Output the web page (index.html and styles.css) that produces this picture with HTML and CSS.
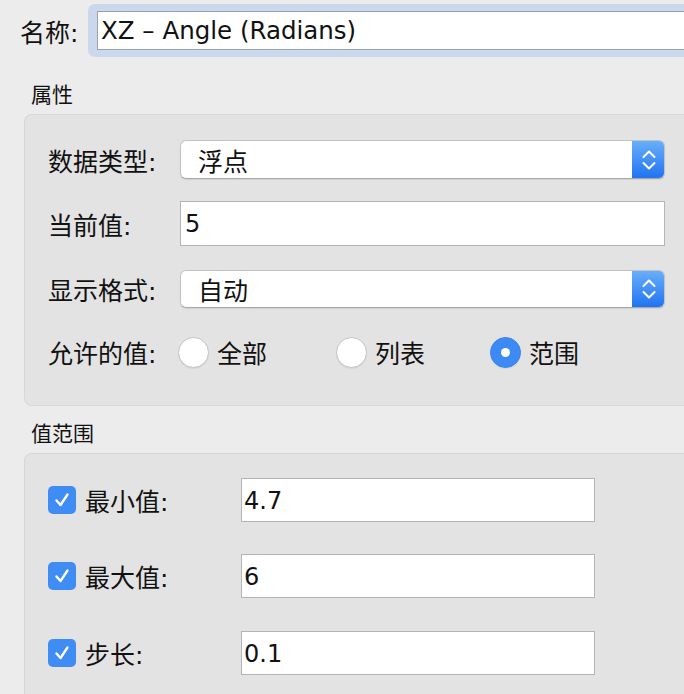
FILE: index.html
```html
<!DOCTYPE html>
<html lang="zh">
<head>
<meta charset="utf-8">
<title>属性</title>
<link rel="stylesheet" href="styles.css">
</head>
<body>
<div class="page">
  <div class="name-row">
    <span class="name-label">名称:</span>
    <div class="focus-ring">
      <div class="name-field">XZ – Angle (Radians)</div>
    </div>
  </div>

  <div class="section-title">属性</div>
  <div class="group group-props">
    <div class="row row-1">
      <span class="label">数据类型:</span>
      <div class="popup">
        <span class="popup-text">浮点</span>
        <span class="popup-arrows">
          <svg width="18" height="26" viewBox="0 0 18 26"><path d="M3.5 10 L9 4.5 L14.5 10 M3.5 16 L9 21.5 L14.5 16" fill="none" stroke="#fff" stroke-width="2" stroke-linecap="round" stroke-linejoin="round"/></svg>
        </span>
      </div>
    </div>
    <div class="row row-2">
      <span class="label">当前值:</span>
      <div class="field">5</div>
    </div>
    <div class="row row-3">
      <span class="label">显示格式:</span>
      <div class="popup">
        <span class="popup-text">自动</span>
        <span class="popup-arrows">
          <svg width="18" height="26" viewBox="0 0 18 26"><path d="M3.5 10 L9 4.5 L14.5 10 M3.5 16 L9 21.5 L14.5 16" fill="none" stroke="#fff" stroke-width="2" stroke-linecap="round" stroke-linejoin="round"/></svg>
        </span>
      </div>
    </div>
    <div class="row row-4">
      <span class="label">允许的值:</span>
      <div class="radios">
        <label class="radio-opt opt-1"><span class="radio"></span><span>全部</span></label>
        <label class="radio-opt opt-2"><span class="radio"></span><span>列表</span></label>
        <label class="radio-opt opt-3"><span class="radio on"></span><span>范围</span></label>
      </div>
    </div>
  </div>

  <div class="section-title section-2">值范围</div>
  <div class="group group-range">
    <div class="crow crow-1">
      <span class="check"><svg width="28" height="28" viewBox="0 0 28 28"><path d="M8.5 14.5 L12.5 19 L19.5 8.5" fill="none" stroke="#fff" stroke-width="2.4" stroke-linecap="round" stroke-linejoin="round"/></svg></span>
      <span class="clabel">最小值:</span>
      <div class="cfield">4.7</div>
    </div>
    <div class="crow crow-2">
      <span class="check"><svg width="28" height="28" viewBox="0 0 28 28"><path d="M8.5 14.5 L12.5 19 L19.5 8.5" fill="none" stroke="#fff" stroke-width="2.4" stroke-linecap="round" stroke-linejoin="round"/></svg></span>
      <span class="clabel">最大值:</span>
      <div class="cfield">6</div>
    </div>
    <div class="crow crow-3">
      <span class="check"><svg width="28" height="28" viewBox="0 0 28 28"><path d="M8.5 14.5 L12.5 19 L19.5 8.5" fill="none" stroke="#fff" stroke-width="2.4" stroke-linecap="round" stroke-linejoin="round"/></svg></span>
      <span class="clabel">步长:</span>
      <div class="cfield">0.1</div>
    </div>
  </div>
</div>
</body>
</html>
```

FILE: styles.css
```css
html, body {
  margin: 0;
  padding: 0;
  background: #ececec;
  overflow: hidden;
}
.page {
  width: 684px;
  height: 694px;
  overflow: hidden;
  font-family: "DejaVu Sans", "Noto Sans CJK SC", sans-serif;
  color: #111;
  font-size: 25px;
}
.name-row {
  display: flex;
  align-items: center;
  padding-top: 4px;
  padding-left: 20px;
}
.name-label {
  width: 68px;
}
.focus-ring {
  flex: 1;
  background: #c9d8ec;
  border-radius: 7px 0 0 7px;
  padding: 7px 0 7px 9px;
}
.name-field {
  height: 37px;
  line-height: 37px;
  background: #fff;
  border: 1px solid #9aa3ad;
  border-right: none;
  padding-left: 3px;
  font-size: 24.5px;
  white-space: nowrap;
}
.section-title {
  margin-top: 27px;
  margin-left: 31px;
  font-size: 21px;
  line-height: 23px;
  height: 23px;
}
.section-2 {
  margin-top: 17px;
}
.group {
  margin-left: 24px;
  margin-top: 7px;
  background: #e3e3e3;
  border: 1px solid #d6d6d6;
  border-right: none;
  border-radius: 8px 0 0 8px;
  box-sizing: border-box;
}
.group-props {
  height: 292px;
  padding: 25px 19px 0 23px;
  display: flex;
  flex-direction: column;
}
.row {
  display: flex;
  align-items: center;
}
.row-2 { margin-top: 22px; }
.row-3 { margin-top: 24px; }
.row-4 { margin-top: 26px; }
.label {
  width: 132px;
  flex: none;
}
.popup {
  flex: 1;
  height: 39px;
  box-sizing: border-box;
  background: #fff;
  border: 1px solid #c2c2c2;
  border-bottom-color: #a8a8a8;
  border-radius: 6px;
  display: flex;
  align-items: center;
  overflow: hidden;
  box-shadow: 0 1px 1px rgba(0,0,0,0.08);
}
.row-3 .popup { height: 38px; }
.popup-text {
  flex: 1;
  padding-left: 17px;
}
.popup-arrows {
  width: 33px;
  align-self: stretch;
  margin: -1px -1px -1px 0;
  background: linear-gradient(#6ab0fb, #1f72f1);
  display: flex;
  align-items: center;
  justify-content: center;
  border-radius: 0 6px 6px 0;
}
.field {
  flex: 1;
  height: 45px;
  line-height: 45px;
  box-sizing: border-box;
  background: #fff;
  border: 1px solid #b4b4b4;
  padding-left: 4px;
  font-size: 24px;
}
.radios {
  display: flex;
  align-items: center;
}
.radio-opt {
  display: flex;
  align-items: center;
  gap: 8px;
}
.opt-1 { margin-left: -2px; }
.opt-2 { margin-left: 69px; }
.opt-3 { margin-left: 65px; }
.radio {
  width: 31px;
  height: 31px;
  box-sizing: border-box;
  border-radius: 50%;
  background: #fff;
  border: 1px solid #c4c4c4;
  box-shadow: 0 1px 1px rgba(0,0,0,0.06);
}
.radio.on {
  background: #3d8af5;
  border-color: #3a84ee;
  position: relative;
}
.radio.on::after {
  content: "";
  position: absolute;
  left: 10px;
  top: 10px;
  width: 9px;
  height: 9px;
  border-radius: 50%;
  background: #fff;
}
.group-range {
  height: 260px;
  padding: 24px 0 0 23px;
}
.crow {
  display: flex;
  align-items: center;
  height: 44px;
}
.crow-2 { margin-top: 32px; }
.crow-3 { margin-top: 33px; }
.check {
  width: 28px;
  height: 28px;
  border-radius: 5px;
  background: #3f8cf4;
  flex: none;
  display: flex;
}
.clabel {
  margin-left: 9px;
  width: 156px;
}
.cfield {
  width: 354px;
  height: 44px;
  line-height: 44px;
  box-sizing: border-box;
  background: #fff;
  border: 1px solid #b4b4b4;
  padding-left: 2px;
  font-size: 24px;
}
```
